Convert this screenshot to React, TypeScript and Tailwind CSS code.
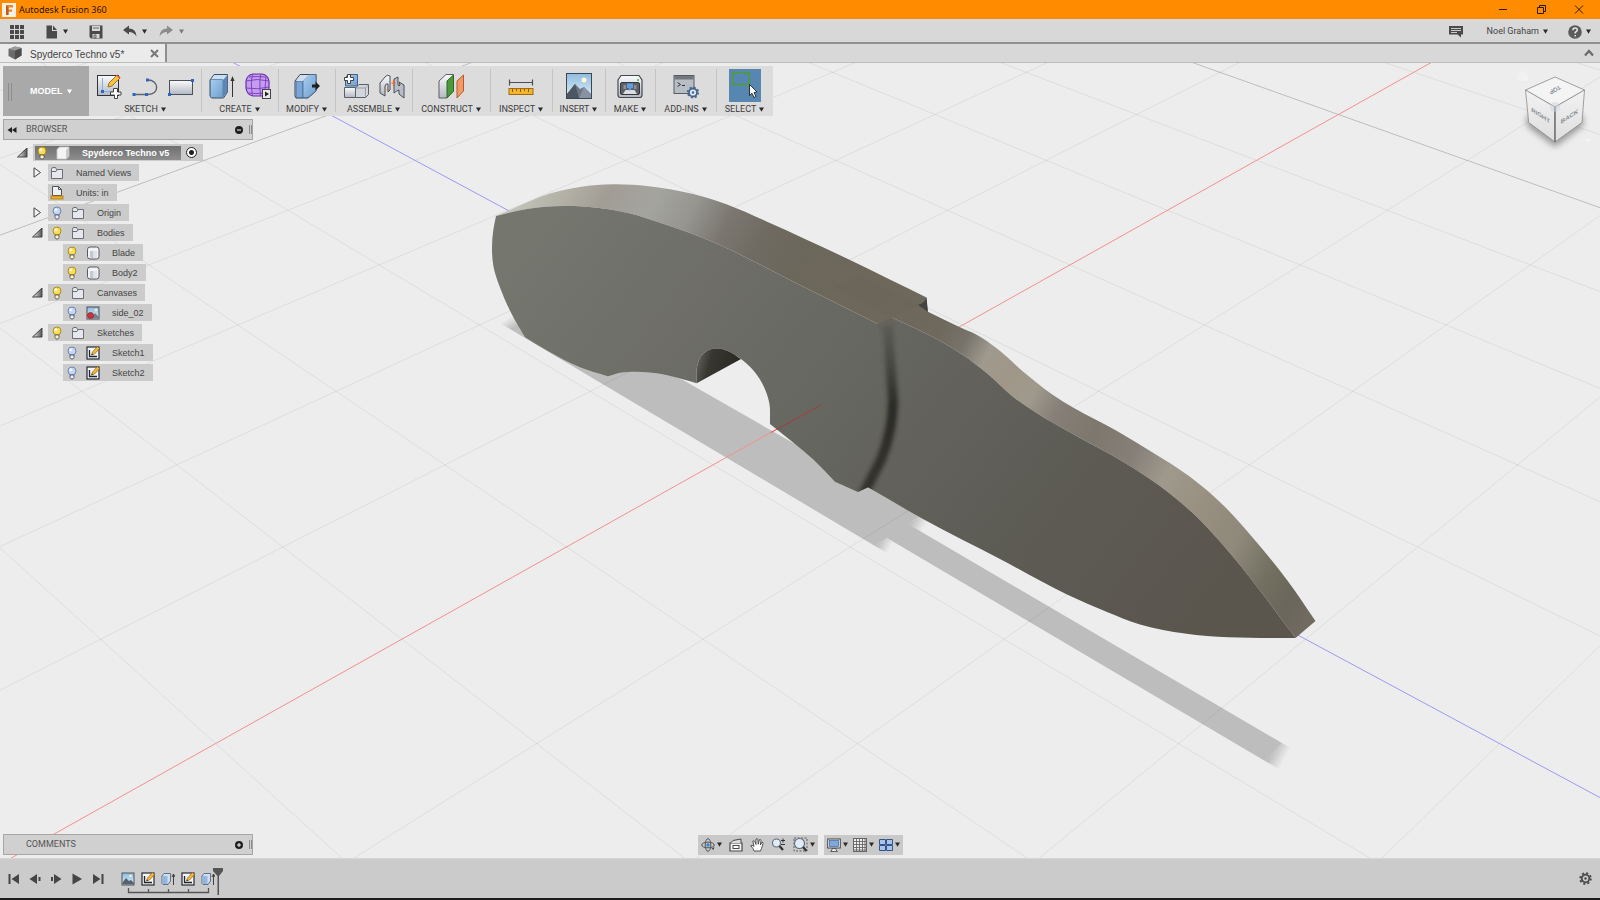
import React from "react";

type Pt = [number, number];

/* ---------- geometry helpers ---------- */

/** Ground-plane grid position (i along the red axis, j along the blue one) to view coordinates. */
function project(i: number, j: number): Pt {
  const d = j - i;
  const u = i + j;
  const w = 1 - 0.052 * d;
  return [(844.4 - 41.3 * d + (u * 254.2) / 2) / w, (391.3 + 49.4 * d) / w];
}

function segment(a: Pt, b: Pt): string {
  return `M${a[0].toFixed(1)} ${a[1].toFixed(1)}L${b[0].toFixed(1)} ${b[1].toFixed(1)}`;
}

/** Smooth curve through unevenly spaced points, continuing from the first one. */
function curve(p: Pt[]): string {
  const dist = (a: Pt, b: Pt) => Math.hypot(b[0] - a[0], b[1] - a[1]);
  const tangent = (k: number): Pt => {
    if (k === 0 || k === p.length - 1) {
      const a = p[Math.max(k - 1, 0)];
      const b = p[Math.min(k + 1, p.length - 1)];
      const l = dist(a, b);
      return [(b[0] - a[0]) / l, (b[1] - a[1]) / l];
    }
    const l = dist(p[k - 1], p[k]);
    const r = dist(p[k], p[k + 1]);
    return [0, 1].map((c) => (((p[k][c] - p[k - 1][c]) / l) * r + ((p[k + 1][c] - p[k][c]) / r) * l) / (l + r)) as Pt;
  };
  let s = "";
  for (let k = 0; k < p.length - 1; k++) {
    const h = dist(p[k], p[k + 1]) / 3;
    const a = tangent(k);
    const b = tangent(k + 1);
    s += `C${(p[k][0] + a[0] * h).toFixed(2)} ${(p[k][1] + a[1] * h).toFixed(2)} ${(p[k + 1][0] - b[0] * h).toFixed(2)} ${(
      p[k + 1][1] - b[1] * h
    ).toFixed(2)} ${p[k + 1][0]} ${p[k + 1][1]}`;
  }
  return s;
}

const range = (a: number, b: number) => Array.from({ length: b - a + 1 }, (_, k) => a + k);

const handleBack: Pt[] = [
  [496, 216], [510, 210], [550, 193.5], [580, 187], [613, 184.3], [647, 186], [693, 194], [727, 204.5], [767, 221.7], [850, 260], [926.5, 297.5],
];
const bladeBack: Pt[] = [
  [927.5, 311.5], [960, 327.3], [977, 335], [997, 348.5], [1023, 371.5], [1053, 395], [1073, 407.5], [1117, 431], [1153, 452.7],
  [1190, 476.7], [1223, 505], [1253, 538], [1287, 580], [1315.5, 621],
];
const handleFront: Pt[] = [
  [496, 216], [527, 209], [563, 206], [597, 207.7], [627, 212.7], [667, 225], [713, 242], [757, 263], [800, 285], [878, 324],
];
const bladeFront: Pt[] = [
  [892, 317.5], [940, 340.7], [963, 355], [987, 373.3], [1013, 396.7], [1037, 413.3], [1073, 434], [1123, 461.7], [1160, 486],
  [1193, 513.3], [1223, 545], [1257, 586.7], [1295.5, 638],
];
const belly: Pt[] = [
  [1295.5, 638], [1250, 637.7], [1207, 636], [1163, 630], [1140, 624.5], [1107, 612], [1067, 594.500], [1000, 559], [923, 519], [868, 487.3],
];
const choil: Pt[] = [[835, 481.7], [813, 459.3], [795, 444], [770, 424]];
const notch: Pt[] = [
  [770, 424], [769.3, 403], [762, 383], [753, 370], [741, 359], [730, 352], [718, 348.5], [710, 349.5], [702, 355], [697, 367], [696.7, 383.3],
];
const grip: Pt[] = [[696.7, 383.3], [680, 378.5], [657, 373.2], [637, 371.7], [620, 372.7], [607.7, 376.3]];
const butt: Pt[] = [[607.7, 376.3], [580, 367.3], [547, 350.500], [525, 337.3]];
const buttEnd: Pt[] = [[525, 337.3], [511.7, 314], [500, 287.5], [493.5, 266.7], [492, 246.7], [493.3, 230], [496, 216]];

const facePath =
  "M496 216" + curve(handleFront) + "L892 317.5" + curve(bladeFront) + curve(belly) + "L858 492L835 481.7" + curve(choil) + curve(notch) + curve(grip) + curve(butt) + curve(buttEnd) + "Z";
const spinePath =
  "M496 216" + curve(handleBack) + "L927.5 311.5" + curve(bladeBack) + "L1295.5 638" + curve([...bladeFront].reverse()) + "L878 324" + curve([...handleFront].reverse()) + "Z";

const lightLines =
  range(-10, 16).filter((i) => i !== 0 && i !== 5).map((i) => segment(project(i, i - 18), project(i, i + 12))).join("") +
  range(-16, 10).filter((j) => j !== 0 && j !== -5).map((j) => segment(project(j + 18, j), project(j - 12, j))).join("");
const majorLines = segment(project(5, -13), project(5, 17)) + segment(project(13, -5), project(-17, -5));

const spineStops: [number, string][] = [
  [0.005, "#c6c7bc"], [0.06, "#b3b1a6"], [0.1, "#a19d95"], [0.15, "#a4a49f"], [0.19, "#969590"], [0.23, "#7b7770"], [0.27, "#706b62"], [0.32, "#6c675b"],
  [0.49, "#6e695c"], [0.52, "#77736a"], [0.548, "#9f9a8e"], [0.58, "#a09688"], [0.612, "#9f9a8d"], [0.645, "#857f77"],
  [0.69, "#7d786d"], [0.74, "#857f78"], [0.782, "#9f998c"], [0.835, "#988f80"], [0.885, "#8e897b"], [0.93, "#737061"], [0.965, "#6a665b"], [1, "#726b63"],
];

function Scene() {
  return (
    <svg className="absolute inset-0 h-full w-full" viewBox="0 63 1600 795" preserveAspectRatio="xMidYMid slice" aria-label="3D model view">
      <defs>
        <linearGradient id="face" gradientUnits="userSpaceOnUse" x1="560" y1="190" x2="1180" y2="680">
          <stop offset="0" stopColor="#75766e" />
          <stop offset="0.45" stopColor="#666660" />
          <stop offset="0.7" stopColor="#5d5c55" />
          <stop offset="1" stopColor="#5a554d" />
        </linearGradient>
        <linearGradient id="spine" gradientUnits="userSpaceOnUse" x1="500" y1="200" x2="1310" y2="630">
          {spineStops.map(([o, c]) => (
            <stop key={o} offset={o} stopColor={c} />
          ))}
        </linearGradient>
        <linearGradient id="hole" gradientUnits="userSpaceOnUse" x1="698" y1="362" x2="735" y2="372">
          <stop offset="0" stopColor="#5c5b53" />
          <stop offset="0.3" stopColor="#37362f" />
          <stop offset="1" stopColor="#2b2a26" />
        </linearGradient>
        <linearGradient id="groove" gradientUnits="userSpaceOnUse" x1="0" y1="318" x2="0" y2="495">
          <stop offset="0" stopColor="#4a4f49" stopOpacity="0.35" />
          <stop offset="0.25" stopColor="#3f423c" stopOpacity="0.8" />
          <stop offset="0.5" stopColor="#2a2925" />
          <stop offset="1" stopColor="#35332e" />
        </linearGradient>
        <linearGradient id="fadeA" gradientUnits="userSpaceOnUse" x1="1273" y1="750" x2="1286" y2="757">
          <stop offset="0" stopColor="#bdbdbd" />
          <stop offset="1" stopColor="#bdbdbd" stopOpacity="0" />
        </linearGradient>
        <linearGradient id="fadeB" gradientUnits="userSpaceOnUse" x1="880" y1="540" x2="891" y2="546">
          <stop offset="0" stopColor="#bdbdbd" />
          <stop offset="1" stopColor="#bdbdbd" stopOpacity="0" />
        </linearGradient>
        <linearGradient id="fadeC" gradientUnits="userSpaceOnUse" x1="914" y1="517" x2="926" y2="524">
          <stop offset="0" stopColor="#bdbdbd" />
          <stop offset="1" stopColor="#bdbdbd" stopOpacity="0" />
        </linearGradient>
        <linearGradient id="fadeD" gradientUnits="userSpaceOnUse" x1="514" y1="328" x2="508" y2="318">
          <stop offset="0" stopColor="#bdbdbd" />
          <stop offset="1" stopColor="#bdbdbd" stopOpacity="0" />
        </linearGradient>
        <filter id="soft" x="-50%" y="-10%" width="200%" height="120%">
          <feGaussianBlur stdDeviation="2.2" />
        </filter>
        <clipPath id="faceClip">
          <path d={facePath} />
        </clipPath>
      </defs>
      <rect x="-400" y="-400" width="2400" height="1700" fill="#ededed" />
      <path d="M515 332L530 325L683 380L795 444L921 515L908 524L1282 743L1265 761L887 538L875 546Z" fill="#bdbdbd" />
      <path d="M1282 743L1296 751L1279 769L1265 761Z" fill="url(#fadeA)" />
      <path d="M875 546L887 538L899 545L887 553Z" fill="url(#fadeB)" />
      <path d="M908 524L921 515L936 522L923 533Z" fill="url(#fadeC)" />
      <path d="M515 332L530 325L514 315L500 323Z" fill="url(#fadeD)" />
      <path d={lightLines} stroke="#000" strokeOpacity="0.065" fill="none" />
      <path d={majorLines} stroke="#000" strokeOpacity="0.2" fill="none" />
      <path d={segment(project(0, -10), project(0, 10))} stroke="#9a9af6" fill="none" />
      <path d={segment(project(12, 0), project(-9, 0))} stroke="#f58f8f" fill="none" />
      <path d={spinePath} fill="url(#spine)" />
      <path d="M832 288L858 276L921 304L892 318Z" fill="#5f5b52" opacity="0.08" />
      <path d="M918 305Q925 303 926.500 297.500L928 312Z" fill="#42443f" />
      <path d={facePath} fill="url(#face)" />
      <path d="M877 324L892 317L896 325L880 333Z" fill="#66635a" />
      <g clipPath="url(#faceClip)">
        <path d="M888 326Q890 360 893 400Q893 430 881 460L863 495" stroke="url(#groove)" strokeWidth="10" fill="none" filter="url(#soft)" />
      </g>
      <path d={"M696.7 383.3" + curve([...notch].slice(4).reverse()) + "Z"} fill="url(#hole)" />
      <path d="M771 432.500L821 405" stroke="#d02020" strokeOpacity="0.6" fill="none" />
    </svg>
  );
}

/* ---------- icons ---------- */

function Icon({ size = 26, className = "", children }: { size?: number; className?: string; children: React.ReactNode }) {
  return (
    <svg width={size} height={size} viewBox={`0 0 ${size} ${size}`} className={"shrink-0 " + className} fill="none" aria-hidden="true">
      {children}
    </svg>
  );
}

const Caret = ({ className = "text-[#2b2b2b]" }: { className?: string }) => (
  <svg width="5" height="5" viewBox="0 0 5 5" className={"shrink-0 " + className} aria-hidden="true">
    <path d="M0 0.500H5L2.500 4.800Z" fill="currentColor" />
  </svg>
);

function IconDefs() {
  return (
    <svg width="0" height="0" className="absolute" aria-hidden="true">
      <defs>
        <linearGradient id="blue" x1="0" y1="0" x2="1" y2="1">
          <stop offset="0" stopColor="#a9cdf0" />
          <stop offset="1" stopColor="#6f9fcd" />
        </linearGradient>
        <linearGradient id="steel" x1="0" y1="0" x2="0" y2="1">
          <stop offset="0" stopColor="#fafbfc" />
          <stop offset="1" stopColor="#b3b8c2" />
        </linearGradient>
        <linearGradient id="sky" x1="0" y1="0" x2="0" y2="1">
          <stop offset="0" stopColor="#8dbce0" />
          <stop offset="1" stopColor="#e4f0f6" />
        </linearGradient>
        <linearGradient id="arrow" x1="0" y1="0" x2="1" y2="0">
          <stop offset="0" stopColor="#eee" />
          <stop offset="1" stopColor="#555" />
        </linearGradient>
      </defs>
    </svg>
  );
}

const NewSketch = () => (
  <Icon>
    <rect x="1.500" y="2.500" width="21" height="20" fill="url(#steel)" stroke="#30343a" />
    <path d="M6.500 5V19M5 18.500H19" stroke="#7fb0de" />
    <rect x="5" y="17" width="3" height="3" fill="#2f64c8" />
    <path d="M12 14L13 10L21 2L24 5L16 13Z" fill="#f6c341" stroke="#8c5a10" strokeWidth="0.8" />
    <path d="M21 2L24 5" stroke="#d4483a" strokeWidth="1.6" />
    <path d="M17 16h4v3.500h3.500v3h-3.500V26h-3v-3.500h-4v-3h3Z" transform="translate(0.500 -0.500)" fill="#fff" stroke="#333" strokeWidth="0.9" />
  </Icon>
);
const ArcLine = () => (
  <Icon>
    <path d="M2 21.500H16M16 21.500C28 21.500 27 7 16 7" stroke="#5f6368" strokeWidth="1.4" />
    <rect x="0.500" y="20" width="3" height="3" fill="#2f64c8" />
    <rect x="13" y="20" width="3" height="3" fill="#2f64c8" />
    <rect x="14" y="5.500" width="3" height="3" fill="#2f64c8" />
  </Icon>
);
const RectTool = () => (
  <Icon>
    <rect x="1.500" y="7.500" width="23" height="14" fill="url(#steel)" stroke="#4b5058" />
    <rect x="0" y="20" width="3" height="3" fill="#2f64c8" />
    <rect x="23" y="6" width="3" height="3" fill="#2f64c8" />
  </Icon>
);
const Extrude = () => (
  <Icon>
    <path d="M1 7L5 1.500H18.500V19L14.500 25H2.500L1 23Z" fill="#c9dff3" stroke="#3c5068" />
    <rect x="1.500" y="6.500" width="12.500" height="18" rx="1" fill="url(#blue)" stroke="#4a6f95" strokeWidth="0.7" />
    <path d="M14 7L18.500 2V19L14 24.500Z" fill="#5d87b0" />
    <path d="M23.500 24V6" stroke="#333" />
    <path d="M21.500 8L23.500 3L25.500 8Z" fill="#333" />
  </Icon>
);
const FormTool = () => (
  <Icon>
    <path d="M1 8Q2 2 8 1H17Q23 2 24 8V15Q23 22 17 23H8Q2 22 1 15Z" fill="#c49cf0" stroke="#6a2fa8" strokeWidth="1.2" />
    <path d="M8 1Q5 8 7.500 23M16 1Q14 8 15.500 23M21 4Q20 12 20 20M1 8Q12 5 24 8M1 15Q12 17 24 14M4 4Q12 3 21 4M4 20Q12 21 20 20" stroke="#7a3cba" strokeWidth="0.9" />
    <rect x="17.500" y="16.500" width="8" height="9" fill="#e9e9ec" stroke="#444" />
    <path d="M20 18.500V23.500L24 21Z" fill="#222" />
  </Icon>
);
const PressPull = () => (
  <Icon>
    <path d="M1 8L6 1.500H22V18L14 25H2L1 23Z" fill="#dfe7ef" stroke="#34475c" />
    <path d="M2 8H9V24.500H2Z" fill="#79a6d4" stroke="#3f6288" strokeWidth="0.7" />
    <path d="M9 8L15 1.500H22V18L14 24.500H9Z" fill="url(#blue)" stroke="#3f6288" strokeWidth="0.7" />
    <path d="M2 8L7 2H15L9 8Z" fill="#cfdcea" />
    <path d="M18 11.500H21.500V8.500L26 13L21.500 17.500V14.500H18Z" fill="#1f1f1f" />
  </Icon>
);
const NewComponent = () => (
  <Icon>
    <path d="M2.500 13V5L5 1.500H14.500V13Z" fill="url(#blue)" stroke="#3f6288" />
    <path d="M1.500 14.500H12.500V24.500H1.500Z" fill="url(#steel)" stroke="#5b6068" />
    <path d="M12.500 15L16 11.500H25.500V21.500L22.500 24.500H12.500Z" fill="#d2d6dc" stroke="#5b6068" />
    <path d="M13 15H22.500V24.500M22.500 15L25.500 12" stroke="#80868f" strokeWidth="0.7" />
    <path d="M4.500 1.500h3v3h3v3h-3v3h-3v-3h-3v-3h3Z" fill="#fff" stroke="#333" strokeWidth="0.9" />
  </Icon>
);
const Joint = () => (
  <Icon>
    <path d="M1 10L6 4Q8 1 11 3V17L9 19V11Q7 10 6 13V23L1 20Z" fill="url(#steel)" stroke="#4a4f57" />
    <path d="M15 6L19 4V12Q20 14 21 12L20 9L25 12V25L20 21V17Q17 18 15 20Z" fill="#b9bec6" stroke="#4a4f57" />
    <path d="M14.500 7V13M12.500 10H16.500" stroke="#ee6a22" strokeWidth="1.2" />
    <circle cx="8.500" cy="16.500" r="0.900" fill="#ee6a22" />
  </Icon>
);
const Plane = () => (
  <Icon>
    <path d="M1 8L8 1.500H15.500V18L9 25H1Z" fill="url(#steel)" stroke="#5a5f66" />
    <path d="M9 8L15.500 2V18L9 25Z" fill="#4d9a3c" stroke="#2f6724" />
    <path d="M19 8L25.500 2V18L19 25Z" fill="#f09a6a" stroke="#b85a28" />
  </Icon>
);
const Measure = () => (
  <Icon>
    <path d="M1 9.500H25M1.500 6.500V12.500M24.500 6.500V12.500" stroke="#4a4f57" strokeWidth="1.2" />
    <rect x="1" y="15.500" width="24" height="6" fill="#f2b52c" stroke="#a26a10" />
    <path d="M4.500 16V19M8.500 16V18M12.500 16V19M16.500 16V18M20.500 16V19" stroke="#7d4f08" strokeWidth="0.9" />
  </Icon>
);
const Picture = () => (
  <Icon>
    <rect x="0.500" y="0.500" width="25" height="25" fill="url(#sky)" stroke="#3c4652" />
    <circle cx="18" cy="7" r="2.500" fill="#fffbd2" />
    <path d="M1 21L9 11L14 16L18 14L25 21V25H1Z" fill="#6c7785" />
    <path d="M1 21L9 11L13 25H1Z" fill="#4d5663" />
    <path d="M13 25L18 14L25 21V25Z" fill="#8892a0" />
  </Icon>
);
const Printer = () => (
  <Icon>
    <path d="M1 7L4 2.500H22L25 7V22Q25 24.500 22.500 24.500H3.500Q1 24.500 1 22Z" fill="url(#steel)" stroke="#44484f" strokeWidth="1.2" />
    <rect x="3.500" y="9.500" width="19" height="12" rx="1.500" fill="#5c6169" stroke="#34373c" />
    <path d="M6 21L8.500 17H17.500L20 21Z" fill="#dadde2" />
    <path d="M6.500 12H9V16H6.500ZM17 12H19.500V16H17Z" fill="#8a8f97" />
    <path d="M10 10.500H16V15H14.500L13 18L11.500 15H10Z" fill="#5f9fe0" />
    <circle cx="21" cy="7" r="1" fill="#3fae3f" />
  </Icon>
);
const AddIns = () => (
  <Icon>
    <rect x="1" y="2.500" width="20" height="18" fill="#b9bdc4" stroke="#555a63" />
    <rect x="1.500" y="3" width="19" height="3.500" fill="#72777f" />
    <path d="M4.500 9.500L7.500 11.500L4.500 13.500M9 12.500H12" stroke="#333" />
    <circle cx="20" cy="19.500" r="4" fill="#e2eaf5" stroke="#46658f" strokeWidth="1.800" />
    <circle cx="20" cy="19.500" r="5.300" stroke="#46658f" strokeWidth="1.600" strokeDasharray="2 2.160" />
    <circle cx="20" cy="19.500" r="1.300" fill="#46658f" />
  </Icon>
);
const SelectTool = () => (
  <svg width="32" height="33" viewBox="0 0 32 33" className="shrink-0" fill="none" aria-hidden="true">
    <rect width="32" height="33" fill="#5787b0" />
    <rect x="3.500" y="3.500" width="17" height="12" stroke="#4da024" strokeWidth="1.300" />
    <path d="M20.500 15.500V26.500L23 24.300L25 28.500L27 27.500L25 23.500L28 23Z" fill="#fff" stroke="#222" strokeWidth="0.9" />
  </svg>
);

const Bulb = ({ on }: { on: boolean }) => (
  <Icon size={14}>
    <circle cx="7" cy="5" r="4" fill={on ? "#f8de55" : "#c3d6f6"} stroke={on ? "#b08d1c" : "#6c85b4"} />
    <circle cx="5.800" cy="3.800" r="1.500" fill="#fff" opacity="0.8" />
    <path d="M5 9H9V11.500L8 13H6L5 11.500Z" fill={on ? "#fff3c0" : "#e8eefb"} stroke="#56595f" strokeWidth="0.9" />
  </Icon>
);
const Folder = () => (
  <Icon size={14}>
    <path d="M1.500 12.500V3.500Q1.500 1.500 3 1.500H5.500L6.500 3.500H12.500V12.500Z" fill="#e6e8ee" stroke="#6a6d76" />
    <path d="M2 5.500H6L7 4" stroke="#6a6d76" />
  </Icon>
);
const UnitsIcon = () => (
  <Icon size={14}>
    <path d="M2.500 9.500V0.500H8.500L11.500 3.500V9.500Z" fill="#eef0f4" stroke="#4f525a" />
    <path d="M8.500 0.500V3.500H11.500" stroke="#4f525a" />
    <rect x="1" y="10" width="12" height="3" fill="#f2ae1e" stroke="#ad7610" strokeWidth="0.800" />
  </Icon>
);
const BodyIcon = () => (
  <Icon size={14}>
    <rect x="1.500" y="1" width="11.500" height="12" rx="2.500" fill="#f2f3f5" stroke="#565962" />
    <path d="M4 5H7.500V12H4Z" fill="#c4c8d0" />
    <path d="M8 5H11V12H8Z" fill="#e2e4e9" />
  </Icon>
);
const CubeIcon = () => (
  <Icon size={14}>
    <path d="M1 3.500L3.500 1H13V10L10.500 13H1Z" fill="#f4f4f4" stroke="#c7c7c7" strokeWidth="0.800" />
    <path d="M10 4L13 1V10L10 13Z" fill="#c9c9c9" />
  </Icon>
);
const CanvasIcon = () => (
  <Icon size={14}>
    <rect x="1" y="1" width="12" height="12" fill="url(#sky)" stroke="#46505c" />
    <circle cx="10" cy="4" r="1.300" fill="#fff5a8" />
    <path d="M5 12.500L9 7L13 11V12.500Z" fill="#77818e" />
    <circle cx="4.500" cy="9.500" r="3" fill="#d0323a" stroke="#8d1d24" strokeWidth="0.800" />
  </Icon>
);
const SketchIcon = () => (
  <Icon size={14}>
    <rect x="1" y="1" width="12" height="12" fill="#f2f5fa" stroke="#252a31" strokeWidth="1.200" />
    <path d="M3.500 4V10.500H11" stroke="#1d2530" strokeWidth="1.300" />
    <path d="M5.500 9L6.500 6L11.500 0.500L13.500 2.500L8.500 8Z" fill="#f5b935" stroke="#8d5a10" strokeWidth="0.700" />
    <path d="M5.500 9L7 8.500L6 7.500Z" fill="#222" />
  </Icon>
);
const ExtrudeIcon = () => (
  <Icon size={14}>
    <path d="M1 4L3 1.500H9.500V9L7 12.500H2L1 11.500Z" fill="#cfe0f2" stroke="#53647c" strokeWidth="0.900" />
    <rect x="1.500" y="4" width="5" height="8" fill="#94b6dd" />
    <path d="M12.500 13V3M11 5L12.500 2L14 5" stroke="#333" strokeWidth="0.900" />
  </Icon>
);
const PictureIcon = () => (
  <Icon size={14}>
    <rect x="1" y="1" width="12" height="12" fill="url(#sky)" stroke="#4c5661" />
    <circle cx="9.500" cy="4" r="1.200" fill="#fff9c8" />
    <path d="M1.500 10.500L5 6L8 9L10 8L13 11V12.500H1.500Z" fill="#57616e" />
  </Icon>
);

/* ---------- data ---------- */

type Group = { label: string; width: string; icons: [string, React.ReactNode][] };
const groups: Group[] = [
  { label: "SKETCH", width: "w-[112px]", icons: [["Create sketch", <NewSketch />], ["Line", <ArcLine />], ["Rectangle", <RectTool />]] },
  { label: "CREATE", width: "w-[77px]", icons: [["Extrude", <Extrude />], ["Create form", <FormTool />]] },
  { label: "MODIFY", width: "w-[57px]", icons: [["Press pull", <PressPull />]] },
  { label: "ASSEMBLE", width: "w-[77px]", icons: [["New component", <NewComponent />], ["Joint", <Joint />]] },
  { label: "CONSTRUCT", width: "w-[78px]", icons: [["Offset plane", <Plane />]] },
  { label: "INSPECT", width: "w-[62px]", icons: [["Measure", <Measure />]] },
  { label: "INSERT", width: "w-[53px]", icons: [["Attached canvas", <Picture />]] },
  { label: "MAKE", width: "w-[50px]", icons: [["3D print", <Printer />]] },
  { label: "ADD-INS", width: "w-[61px]", icons: [["Scripts and add-ins", <AddIns />]] },
  { label: "SELECT", width: "w-[57px]", icons: [["Select", <SelectTool />]] },
];

type Node = { label: string; level: 1 | 2; arrow?: "open" | "closed"; bulb?: boolean; icon: React.ReactNode };
const nodes: Node[] = [
  { label: "Named Views", level: 1, arrow: "closed", icon: <Folder /> },
  { label: "Units: in", level: 1, icon: <UnitsIcon /> },
  { label: "Origin", level: 1, arrow: "closed", bulb: false, icon: <Folder /> },
  { label: "Bodies", level: 1, arrow: "open", bulb: true, icon: <Folder /> },
  { label: "Blade", level: 2, bulb: true, icon: <BodyIcon /> },
  { label: "Body2", level: 2, bulb: true, icon: <BodyIcon /> },
  { label: "Canvases", level: 1, arrow: "open", bulb: true, icon: <Folder /> },
  { label: "side_02", level: 2, bulb: false, icon: <CanvasIcon /> },
  { label: "Sketches", level: 1, arrow: "open", bulb: true, icon: <Folder /> },
  { label: "Sketch1", level: 2, bulb: false, icon: <SketchIcon /> },
  { label: "Sketch2", level: 2, bulb: false, icon: <SketchIcon /> },
];

/* ---------- parts ---------- */

function TitleBar() {
  return (
    <header className="flex h-[19px] shrink-0 items-center bg-[#ff8c00] pl-[2px] pr-4">
      <Icon size={14}>
        <rect width="14" height="14" fill="#f3efe9" />
        <path d="M4 2H11V4.500H6.500V6.500H10V8.800H6.500V12H4Z" fill="#e8872c" />
        <path d="M4 2L6.500 4.500V12H4Z" fill="#b95f17" />
      </Icon>
      <h1 className="ml-[3px] flex-1 font-['Noto_Sans',sans-serif] text-[9px] leading-none text-[#1c1200]">Autodesk Fusion 360</h1>
      <div className="flex items-center gap-7 text-[#2a1a00]">
        <button aria-label="Minimize"><Icon size={10}><path d="M1 4.500H9" stroke="currentColor" /></Icon></button>
        <button aria-label="Restore"><Icon size={10}><path d="M1.500 2.500H7.500V8.500H1.500ZM3.500 2V0.500H9.500V6.500H8" stroke="currentColor" /></Icon></button>
        <button aria-label="Close"><Icon size={10}><path d="M1 0.500L9 8.500M9 0.500L1 8.500" stroke="currentColor" /></Icon></button>
      </div>
    </header>
  );
}

function QuickBar() {
  return (
    <div className="flex h-[25px] shrink-0 items-center border-b-2 border-[#8f8f8f] bg-[#d8d8d8] px-[9px] pt-[2px] text-[#4a4a4a]">
      <button aria-label="Show data panel">
        <Icon size={16}>
          <path d="M1 1h4v4H1ZM6 1h4v4H6ZM11 1h4v4H11ZM1 6h4v4H1ZM6 6h4v4H6ZM11 6h4v4H11ZM1 11h4v4H1ZM6 11h4v4H6ZM11 11h4v4H11Z" fill="currentColor" />
        </Icon>
      </button>
      <button aria-label="File" className="ml-5 flex items-center gap-1">
        <Icon size={14}><path d="M1.500 0.500H7V6H12V13.500H1.500ZM8 0.500L12 5H8Z" fill="currentColor" /></Icon>
        <Caret />
      </button>
      <button aria-label="Save" className="ml-[21px]">
        <Icon size={14}><path d="M0.500 0.500H13.500V13.500H2L0.500 12Z" fill="currentColor" /><path d="M3 1H11V6H3ZM3.500 9H10.500V13H3.500Z" fill="#d8d8d8" /><path d="M4 3H10M5 10H7V13H5Z" stroke="currentColor" strokeWidth="0.800" /></Icon>
      </button>
      <button aria-label="Undo" className="ml-5 flex items-center gap-[5px]">
        <Icon size={14}><path d="M0 5L6 0.500V3.500Q13 3.500 13.500 11.500Q11 7 6 7V9.500Z" fill="currentColor" /></Icon>
        <Caret />
      </button>
      <button aria-label="Redo" className="ml-3 flex items-center gap-[6px] text-[#8c8c8c]">
        <Icon size={14}><path d="M14 5L8 0.500V3.500Q1 3.500 0.500 11.500Q3 7 8 7V9.500Z" fill="currentColor" /></Icon>
        <Caret className="text-[#7a7a7a]" />
      </button>
      <div className="flex-1" />
      <button aria-label="Comments">
        <Icon size={14}><path d="M0 1H14V9.500H12V12.500L8.500 9.500H0Z" fill="currentColor" /><path d="M2 3.500H12M2 5.500H12M2 7.500H8" stroke="#d8d8d8" strokeWidth="0.900" /></Icon>
      </button>
      <button className="ml-6 flex items-center gap-1 font-['Roboto',sans-serif] text-[9px] leading-none text-[#444]">
        Noel Graham <Caret />
      </button>
      <button aria-label="Help" className="ml-5 flex items-center gap-1">
        <Icon size={14}>
          <circle cx="7" cy="7" r="6.800" fill="#5b5b5b" />
          <path d="M4.800 5.300Q5 3 7 3Q9.300 3 9.300 5Q9.300 6.200 7.200 7.500V8.500M7.200 10V11.500" stroke="#e6e6e6" strokeWidth="1.500" />
        </Icon>
        <Caret />
      </button>
    </div>
  );
}

function TabBar() {
  return (
    <div className="flex h-[19px] shrink-0 items-stretch border-b border-[#bcbebc] bg-[#d8d8d8]">
      <div className="flex items-center border-r-2 border-[#8f8f8f] bg-[#ebebeb] pl-2 pr-[6px]">
        <Icon size={14}>
          <path d="M0.500 3L7 0.500L13.500 2V9.500L7 13.500L0.500 10Z" fill="#6a6a6a" />
          <path d="M7 4.500L13.500 2V9.500L7 13.500Z" fill="#4c4c4c" />
          <path d="M0.500 3L7 0.500L13.500 2L7 4.500Z" fill="#9a9a9a" />
        </Icon>
        <span className="ml-2 pt-[3px] text-[10px] leading-none text-[#444]">Spyderco Techno v5*</span>
        <button aria-label="Close tab" className="ml-[26px]"><Icon size={9}><path d="M1 1L8 8M8 1L1 8" stroke="#777" strokeWidth="2" /></Icon></button>
      </div>
      <div className="flex-1" />
      <button aria-label="Collapse toolbar" className="pr-[6px]">
        <Icon size={10}><path d="M1 7.500L5 3L9 7.500" stroke="#6b6b6b" strokeWidth="2.200" /></Icon>
      </button>
    </div>
  );
}

function Toolbar() {
  return (
    <nav className="flex h-[50px] self-start bg-[#dcdcdc]" aria-label="Toolbar">
      <button className="flex w-[86px] items-center bg-[#a9a9a9] pl-1 pt-px text-[9px] font-bold leading-none text-white">
        <Icon size={18}><path d="M1.500 0V18M4.500 0V18" stroke="#8c8c8c" /></Icon>
        <span className="ml-[5px]">MODEL</span>
        <span className="ml-1 flex"><Caret className="text-white" /></span>
      </button>
      {groups.map((g, k) => (
        <div key={g.label} className={`relative flex shrink-0 flex-col items-center pt-[3px] ${g.width}`}>
          {k > 0 && <span className="absolute left-0 top-[3px] h-[43px] w-px bg-[#c4c4c4]" />}
          <div className="flex h-[33px] items-center gap-[10px]">
            {g.icons.map(([name, icon]) => (
              <button key={name} aria-label={name}>{icon}</button>
            ))}
          </div>
          <button className="flex h-[14px] items-center gap-[3px] whitespace-nowrap font-['Roboto',sans-serif] text-[9px] leading-none text-[#3c3c3c]">
            {g.label} <Caret />
          </button>
        </div>
      ))}
    </nav>
  );
}

function PanelHeader({ title, collapse }: { title: string; collapse: boolean }) {
  return (
    <div className="flex h-[21px] w-[250px] items-center border border-[#a6a6a6] bg-[#d0d0d0] pl-[3px]">
      <span className="flex w-[19px] items-center">
        {collapse && <Icon size={10}><path d="M5 2V8L0.500 5ZM9.500 2V8L5 5Z" fill="#222" /></Icon>}
      </span>
      <h2 className="flex-1 font-['Roboto',sans-serif] text-[9px] leading-none text-[#555]">{title}</h2>
      <button aria-label={collapse ? "Collapse browser" : "Expand comments"}>
        <Icon size={8}>
          <circle cx="4" cy="4" r="4" fill="#1f1f1f" />
          <path d={collapse ? "M2 4H6" : "M2 4H6M4 2V6"} stroke="#fff" />
        </Icon>
      </button>
      <span className="ml-[6px] h-[9px] w-[3px] border-x border-[#8a8a8a]" />
    </div>
  );
}

const Twist = ({ state }: { state?: "open" | "closed" }) => (
  <span className="flex w-4 shrink-0 items-center">
    {state && (
      <button aria-label={state === "open" ? "Collapse" : "Expand"}>
        <Icon size={11}>
          {state === "open" ? (
            <path d="M0.500 10L10 1V10Z" fill="url(#arrow)" stroke="#444" />
          ) : (
            <path d="M2 0.800V10.200L8.500 5.500Z" fill="#f2f2f2" stroke="#444" />
          )}
        </Icon>
      </button>
    )}
  </span>
);

function Browser() {
  return (
    <section className="mt-[3px]" aria-label="Browser">
      <PanelHeader title="BROWSER" collapse />
      <ul className="mt-1 flex flex-col gap-[3px] text-[9px] leading-none text-[#444]">
        <li className="flex h-[17px] items-center pl-[14px]">
          <Twist state="open" />
          <div className="flex h-full items-center bg-[#cbcbcb] px-[2px]">
            <div className="flex h-[14px] items-center bg-linear-to-b from-[#707070] to-[#8e8e8e] pr-3 font-bold text-white">
              <Bulb on />
              <span className="ml-[7px] flex"><CubeIcon /></span>
              <span className="ml-3 pt-px">Spyderco Techno v5</span>
            </div>
            <label className="flex w-5 items-center justify-center">
              <input
                type="radio"
                defaultChecked
                aria-label="Activate component"
                className="size-[11px] appearance-none rounded-full border border-[#222] bg-white bg-[radial-gradient(circle,#222_2px,transparent_3px)]"
              />
            </label>
          </div>
        </li>
        {nodes.map((n) => (
          <li key={n.label} className={"flex h-[17px] items-center " + (n.level === 1 ? "pl-[29px]" : "pl-[44px]")}>
            <Twist state={n.arrow} />
            <div className="flex h-full items-center bg-[#cbcbcb] pl-[2px] pr-2">
              {n.bulb !== undefined && <span className="mr-[7px] flex"><Bulb on={n.bulb} /></span>}
              {n.icon}
              <span className="ml-3 pt-px">{n.label}</span>
            </div>
          </li>
        ))}
      </ul>
    </section>
  );
}

function ViewCube() {
  return (
    <svg width="90" height="90" viewBox="1505 63 90 90" className="absolute right-[5px] top-0" aria-label="View cube">
      <defs>
        <filter id="cubeShadow" x="-30%" y="-30%" width="160%" height="160%"><feGaussianBlur stdDeviation="3" /></filter>
        <linearGradient id="cubeSide" x1="0" y1="0" x2="0" y2="1"><stop offset="0" stopColor="#f2f2f2" /><stop offset="1" stopColor="#dedede" /></linearGradient>
      </defs>
      <path d="M1526 118L1555 100L1584 118L1582 127L1555 147L1528 127Z" fill="#777" opacity="0.7" filter="url(#cubeShadow)" />
      <path d="M1555 77L1584.500 90L1555 107L1525.500 90Z" fill="#f4f4f4" stroke="#8c8c8c" strokeWidth="0.8" />
      <path d="M1525.500 90L1555 107V142L1528.700 122.500Z" fill="url(#cubeSide)" stroke="#8c8c8c" strokeWidth="0.8" />
      <path d="M1584.500 90L1555 107V142L1582 122.500Z" fill="url(#cubeSide)" stroke="#8c8c8c" strokeWidth="0.8" />
      <path d="M1555 107V142" stroke="#555" />
      <circle cx="1555" cy="107" r="5" fill="#ccd3dc" opacity="0.5" />
      <path d="M1516.500 76L1523 70L1529.500 76H1528V81H1518V76Z" fill="#f1f1f1" />
      <path d="M1584 139H1592L1588 143Z" fill="#f3f3f3" />
      <g fontFamily="Liberation Sans, sans-serif" fontWeight="bold" fontSize="6" fill="#858b94" textAnchor="middle">
        <text transform="translate(1540.500 117.500) skewY(33)">RIGHT</text>
        <text transform="translate(1569.500 118.500) skewY(-33)">BACK</text>
        <text transform="translate(1554 88) rotate(150)">TOP</text>
      </g>
    </svg>
  );
}

function NavBar() {
  const tool = "flex items-center gap-[2px]";
  return (
    <div className="flex gap-[6px]">
      <div className="flex h-5 items-center gap-[7px] bg-[#c9c9c9] px-[3px]">
        <button aria-label="Orbit" className={tool}>
          <Icon size={14}>
            <ellipse cx="7" cy="7" rx="6.300" ry="2.800" stroke="#555" strokeWidth="1" />
            <ellipse cx="7" cy="7" rx="2.800" ry="6.300" stroke="#555" strokeWidth="1" />
            <circle cx="7" cy="7" r="1.700" fill="#2f86e0" />
            <path d="M10.500 10.500L13.500 9L12.500 12Z" fill="#444" />
          </Icon>
          <Caret />
        </button>
        <button aria-label="Look at" className={tool}>
          <Icon size={14}>
            <path d="M1 5H13V13H1Z" fill="#f2f2f2" stroke="#4a4a4a" strokeWidth="1.200" />
            <path d="M1.500 5L4 2.500L12 1V5" fill="#dcdcdc" stroke="#4a4a4a" />
            <rect x="4" y="7.500" width="6" height="3" fill="#fff" stroke="#4a4a4a" />
          </Icon>
        </button>
        <button aria-label="Pan" className={tool}>
          <Icon size={14}>
            <path d="M4 13Q3.500 10.500 0.800 7.800Q1.800 6.300 4 8.500L2.800 3Q4 2 4.800 3.500L6 6.500V1Q7.200 0 7.800 1.200L8.200 6.200L9.500 1.600Q11 1.200 11 2.600L10.300 7L12 4.200Q13.500 4.200 13 5.600L11.500 10.500L10.500 13Z" fill="#fff" stroke="#444" strokeWidth="0.9" />
          </Icon>
        </button>
        <button aria-label="Zoom" className={tool}>
          <Icon size={15}>
            <circle cx="5.500" cy="6" r="4" fill="#dceef8" stroke="#667" strokeWidth="1.100" />
            <path d="M8.500 9L12 13" stroke="#333" strokeWidth="2.200" />
            <path d="M10 3.500H14M12 1.500V5.500M10 7.500H14" stroke="#333" />
          </Icon>
        </button>
        <button aria-label="Fit" className={tool}>
          <Icon size={15}>
            <rect x="1" y="1" width="13" height="13" stroke="#555" strokeDasharray="2 1.500" strokeWidth="0.9" />
            <circle cx="6.500" cy="6.500" r="5" fill="#dceef8" stroke="#667" strokeWidth="1.100" />
            <path d="M10 10L13.500 14" stroke="#333" strokeWidth="2.200" />
          </Icon>
          <Caret />
        </button>
      </div>
      <div className="flex h-5 items-center gap-[5px] bg-[#c9c9c9] px-[3px]">
        <button aria-label="Display settings" className={tool}>
          <Icon size={14}>
            <rect x="0.700" y="1" width="12.600" height="9" fill="#f0f0f0" stroke="#444" />
            <rect x="2.500" y="2.500" width="9" height="6" fill="#7fa9da" stroke="#3b62a0" strokeWidth="0.700" />
            <path d="M5 10.500H9V12L10.500 13.500H3.500L5 12Z" fill="#eee" stroke="#444" strokeWidth="0.800" />
          </Icon>
          <Caret />
        </button>
        <button aria-label="Grid settings" className={tool}>
          <Icon size={14}>
            <rect x="0.500" y="0.500" width="13" height="13" fill="#eee" stroke="#666" />
            <path d="M3.500 0V14M6.500 0V14M9.500 0V14M12 0V14M0 3.500H14M0 6.500H14M0 9.500H14M0 12H14" stroke="#666" strokeWidth="0.900" />
          </Icon>
          <Caret />
        </button>
        <button aria-label="Viewports" className={tool}>
          <Icon size={14}>
            <path d="M0.500 1.500H6.500V6.500H0.500ZM7.500 1.500H13.500V6.500H7.500ZM0.500 7.500H6.500V12.500H0.500ZM7.500 7.500H13.500V12.500H7.500Z" fill="#a9c4ea" stroke="#35548c" />
          </Icon>
          <Caret />
        </button>
      </div>
    </div>
  );
}

function Timeline() {
  const steps: [string, React.ReactNode][] = [
    ["Canvas", <PictureIcon />], ["Sketch1", <SketchIcon />], ["Extrude1", <ExtrudeIcon />], ["Sketch2", <SketchIcon />], ["Extrude2", <ExtrudeIcon />],
  ];
  const controls: [string, string][] = [
    ["Go to start", "M0.500 1H2.500V11H0.500ZM11 1V11L3.500 6Z"],
    ["Step back", "M8 1V11L0.500 6ZM9.500 4H11.500V8H9.500Z"],
    ["Step forward", "M4 1V11L11.500 6ZM1 4H3V8H1Z"],
    ["Play", "M1.500 0.500V11.500L11 6Z"],
    ["Go to end", "M1 1V11L8.500 6ZM9.500 1H11.500V11H9.500Z"],
  ];
  return (
    <footer className="flex h-[42px] shrink-0 items-center border-b-2 border-t border-b-[#1c1c1c] border-t-[#d6d6d6] bg-[#cbcbcb] px-2 text-[#454545]">
      <div className="flex gap-[9px]">
        {controls.map(([name, d]) => (
          <button key={name} aria-label={name}><Icon size={12}><path d={d} fill="currentColor" /></Icon></button>
        ))}
      </div>
      <div className="relative ml-[17px] mt-[8px] flex flex-col">
        <div className="flex gap-[6px]">
          {steps.map(([name, icon]) => (
            <button key={name} aria-label={name}>{icon}</button>
          ))}
        </div>
        <svg width="94" height="8" viewBox="0 0 94 8" aria-hidden="true">
          <path d="M7.500 2V6.500H87.500V2M27.500 3V6M47.500 3V6M67.500 3V6" stroke="#555" strokeWidth="1.300" fill="none" />
        </svg>
        <svg width="10" height="27" viewBox="0 0 10 27" className="absolute -top-[4px] left-[92px]" aria-hidden="true">
          <path d="M0 0H10V3L6 8V27H4.500V8L0 3Z" fill="#555" />
        </svg>
      </div>
      <div className="flex-1" />
      <button aria-label="Timeline settings">
        <Icon size={13}>
          <circle cx="6.500" cy="6.500" r="3.800" stroke="#4a4a4a" strokeWidth="1.800" />
          <circle cx="6.500" cy="6.500" r="5.400" stroke="#4a4a4a" strokeWidth="1.700" strokeDasharray="2.120 2.120" />
          <circle cx="6.500" cy="6.500" r="1.200" fill="#4a4a4a" />
        </Icon>
      </button>
    </footer>
  );
}

export default function App() {
  return (
    <div className="flex h-screen flex-col overflow-hidden bg-[#ededed] font-['Liberation_Sans',Arial,sans-serif]">
      <IconDefs />
      <TitleBar />
      <QuickBar />
      <TabBar />
      <main className="relative flex min-h-0 flex-1 flex-col">
        <Scene />
        <ViewCube />
        <div className="relative flex min-h-0 flex-1 flex-col p-[3px]">
          <Toolbar />
          <Browser />
          <div className="flex-1" />
          <div className="grid grid-cols-[1fr_auto_1fr] items-center">
            <PanelHeader title="COMMENTS" collapse={false} />
            <NavBar />
          </div>
        </div>
      </main>
      <Timeline />
    </div>
  );
}
